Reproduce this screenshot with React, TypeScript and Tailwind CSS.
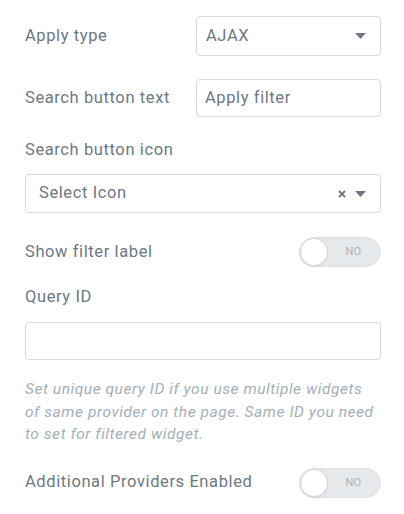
const caret = (
  <svg width="11" height="6" viewBox="0 0 11 6" className="shrink-0">
    <path d="M0 0h11L5.5 6z" fill="#6d7882" />
  </svg>
);

function Toggle() {
  return (
    <div className="relative w-[82px] h-[30px] rounded-full bg-[#e6e9ec] border border-[#dde1e5] shrink-0">
      <div className="absolute left-0 top-0 w-[28px] h-[28px] rounded-full bg-white border border-[#d5dadf] shadow-[0_1px_2px_rgba(0,0,0,0.08)]" />
      <span className="absolute right-[19px] top-[6px] text-[11px] leading-4 tracking-normal text-[#a4afb7]">NO</span>
    </div>
  );
}

export default function App() {
  return (
    <div
      className="w-[404px] h-[514px] bg-white pl-[25px] pr-[23px] pt-[16px] text-[16.5px] tracking-[0.6px] text-[#6d7882] overflow-hidden"
      style={{ fontFamily: "Roboto, 'Liberation Sans', sans-serif" }}
    >
      {/* Apply type */}
      <div className="flex items-center">
        <span className="w-[171px]">Apply type</span>
        <div className="flex items-center justify-between w-[185px] h-[40px] border border-[#d5dadf] rounded-[4px] pl-[9px] pr-[14px]">
          <span>AJAX</span>
          {caret}
        </div>
      </div>

      {/* Search button text */}
      <div className="flex items-center mt-[23px]">
        <span className="w-[171px]">Search button text</span>
        <div className="flex items-center w-[185px] h-[38px] border border-[#d5dadf] rounded-[4px] pl-[8px]">
          <span>Apply filter</span>
        </div>
      </div>

      {/* Search button icon */}
      <div className="mt-[23px] leading-5">Search button icon</div>
      <div className="flex items-center justify-between mt-[14px] h-[39px] border border-[#d5dadf] rounded-[4px] pl-[13px] pr-[14px]">
        <span>Select Icon</span>
        <div className="flex items-center gap-[9px]">
          <svg width="8" height="8" viewBox="0 0 8 8">
            <path d="M1 1l6 6M7 1L1 7" stroke="#6d7882" strokeWidth="1.8" />
          </svg>
          {caret}
        </div>
      </div>

      {/* Show filter label */}
      <div className="flex items-center justify-between mt-[24px]">
        <span>Show filter label</span>
        <Toggle />
      </div>

      {/* Query ID */}
      <div className="mt-[20px] leading-5">Query ID</div>
      <div className="mt-[15px] h-[38px] border border-[#d5dadf] rounded-[4px]" />
      <p className="mt-[18px] w-[355px] text-[15.5px] leading-[22.5px] tracking-[0.55px] italic text-[#a4afb7]">
        Set unique query ID if you use multiple widgets of same provider on the page. Same ID you need to set for filtered widget.
      </p>

      {/* Additional providers */}
      <div className="flex items-center justify-between mt-[22px]">
        <span>Additional Providers Enabled</span>
        <Toggle />
      </div>
    </div>
  );
}
